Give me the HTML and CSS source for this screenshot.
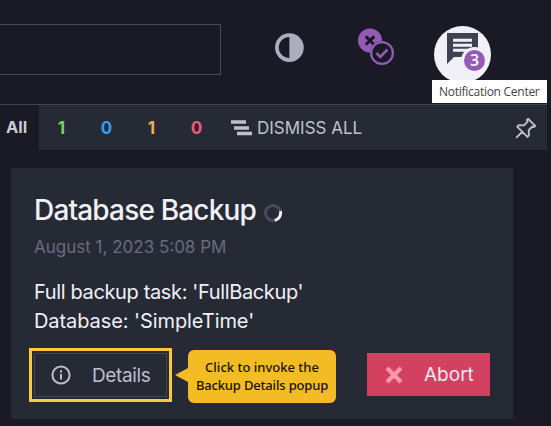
FILE: index.html
```html
<!DOCTYPE html>
<html lang="en">
<head>
<meta charset="utf-8">
<title>Notification Center</title>
<link rel="stylesheet" href="styles.css">
</head>
<body>
<header class="topbar">
  <div class="search"></div>
  <svg class="theme-icon" width="30" height="30" viewBox="0 0 30 30"><circle cx="15.4" cy="14.6" r="12.5" fill="none" stroke="#acacbd" stroke-width="3.8"/><path d="M15.4 2.6a12 12 0 0 1 0 24Z" fill="#acacbd"/></svg>
  <svg class="status-icon" width="38" height="38" viewBox="0 0 38 38"><circle cx="13" cy="12.6" r="12" fill="#955ab5"/><circle cx="25" cy="25" r="12" fill="#1a1926"/><path d="m8.8 8.4 8.4 8.4m0-8.4-8.4 8.4" stroke="#1a1926" stroke-width="3"/><circle cx="25" cy="25" r="10.9" fill="none" stroke="#955ab5" stroke-width="2.3"/><path d="m19.5 25 3.7 3.8 7.3-7.3" fill="none" stroke="#955ab5" stroke-width="2.6"/></svg>
  <div class="bell">
    <svg width="57" height="57" viewBox="0 0 57 57"><path d="M13 7h31v24H20l-7 7Z" fill="#3f4252"/><path d="M19 14.2h19M19 19.2h19M19 24.2h19" stroke="#f0f0f7" stroke-width="2.9"/></svg>
    <span class="badge">3</span>
  </div>
  <div class="tooltip">Notification Center</div>
</header>
<nav class="filters">
  <span class="tab-all">All</span>
  <span class="count green">1</span><span class="count blue">0</span><span class="count orange">1</span><span class="count red">0</span>
  <span class="dismiss"><svg width="21" height="16" viewBox="0 0 21 16"><path d="M0 2h15M3 8h15M6 13.5h15" stroke="#bfbfce" stroke-width="3.6"/></svg><span class="dismiss-label">DISMISS ALL</span></span>
  <svg class="pin" width="22" height="22" viewBox="0 0 22 22"><path d="m13.2 1.8 7 7-1.3 1.3-1.5-.6-3.7 3.7.2 5.2-1.5 1.5L2.2 9.7l1.5-1.5 5.2.2 3.7-3.7-.7-1.5ZM7.2 14.8l-6 6" fill="none" stroke="#c0c0cf" stroke-width="1.9" stroke-linejoin="round"/></svg>
</nav>
<main class="card">
  <h1><span class="title">Database Backup</span><svg width="20" height="20" viewBox="0 0 20 20"><circle cx="10" cy="10" r="7.6" fill="none" stroke="#484a59" stroke-width="3"/><path d="M17.5 8.2A7.6 7.6 0 0 1 11.8 17.4" fill="none" stroke="#f0f0f7" stroke-width="3"/></svg></h1>
  <div class="date">August 1, 2023 5:08 PM</div>
  <div class="message"><span class="line-a">Full backup task: 'FullBackup'</span><br><span class="line-b">Database: 'SimpleTime'</span></div>
  <div class="actions">
    <div class="highlight"><div class="button details"><svg width="20" height="20" viewBox="0 0 20 20"><circle cx="10" cy="10" r="8.6" fill="none" stroke="#bdbdcb" stroke-width="2"/><path d="M10 9v5.5M10 5.2v2.3" stroke="#bdbdcb" stroke-width="2"/></svg><span class="details-label">Details</span></div></div>
    <div class="callout"><span class="call-a">Click to invoke the</span><span class="call-b">Backup Details popup</span></div>
    <div class="button abort"><svg width="18" height="18" viewBox="0 0 18 18"><path d="m2 2 14 14m0-14L2 16" stroke="#ff96ab" stroke-width="4.2"/></svg><span class="abort-label">Abort</span></div>
  </div>
</main>
</body>
</html>
```
FILE: styles.css
```css
* { box-sizing: border-box; }
body { margin: 0; width: 551px; height: 426px; overflow: hidden; background: #1a1926; color: #f0f0f7; font-family: Inter, sans-serif; }
svg { display: block; flex: none; }
.topbar { position: relative; display: flex; width: 547px; height: 105px; border-bottom: 1px solid #44444f; }
.search { width: 221px; height: 51px; margin-top: 24px; border: 1px solid #484955; border-left: 0; }
.theme-icon { margin: 33px 0 0 53px; }
.status-icon { margin: 28px 0 0 53px; }
.bell { position: relative; width: 57px; height: 57px; margin: 26px 0 0 39px; border-radius: 50%; background: #f0f0f7; }
.badge { position: absolute; left: 27px; top: 21px; width: 27px; height: 27px; border: 3px solid #f0f0f7; border-radius: 50%; background: #955ab5; color: #f0f0f7; font: 600 16px/21px "Noto Sans", sans-serif; text-align: center; }
.tooltip { position: absolute; left: 432px; top: 80px; width: 115px; height: 23px; background: #fff; color: #444; font: 12px/23px "Open Sans", sans-serif; padding-left: 7px; white-space: nowrap; letter-spacing: -.27px; }
.filters { display: flex; align-items: center; width: 547px; height: 45px; background: #262a35; }
.tab-all { width: 39px; height: 45px; padding-left: 6px; background: #1a1926; color: #cacad6; font: 700 16.5px/45px Inter, sans-serif; }
.count { width: 45px; text-align: center; font-size: 17px; font-weight: 700; }
.green { color: #77d353; }
.blue { color: #2f9ef5; }
.orange { color: #efad57; }
.red { color: #f05b77; }
.dismiss { display: flex; align-items: center; gap: 5px; margin-left: 12px; color: #c0c0cf; font-size: 17px; white-space: nowrap; }
.pin { margin-left: auto; margin-right: 10px; }
.card { width: 502px; height: 251px; margin: 18px 0 0 11px; padding: 23px 23px 0; background: #262a35; }
h1 { display: flex; align-items: center; gap: 7px; height: 38px; margin: 0; font-size: 28px; font-weight: 500; white-space: nowrap; letter-spacing: -.83px; }
h1 svg { margin-top: 5px; }
.date { height: 34px; margin-top: 1px; color: #696a7f; font-size: 17px; line-height: 34px; }
.message { margin-top: 14px; font-size: 20px; line-height: 29px; white-space: nowrap; }
.line-a { letter-spacing: -.36px; }
.line-b { letter-spacing: -.08px; }
.actions { display: flex; height: 54px; margin: 12px 0 0 -5px; }
.highlight { width: 143px; height: 54px; padding: 2px; border: 3px solid #fdc93b; }
.button { display: flex; align-items: center; font-size: 19px; }
.details { width: 133px; height: 44px; border: 1px solid #444655; color: #bdbdcb; }
.details svg { margin-left: 16px; }
.details-label { margin-left: 21px; letter-spacing: -.35px; }
.callout { position: relative; display: flex; flex-direction: column; width: 148px; height: 53px; margin: 2px 0 0 16px; padding-top: 8px; border-radius: 6px; background: #f4bc24; color: #171100; font: 500 13px/18px "Noto Sans", sans-serif; align-items: center; white-space: nowrap; }
.call-b { letter-spacing: -.17px; }
.callout::before { content: ""; position: absolute; left: -13px; top: 18px; border: solid transparent; border-width: 7px 13px 7px 0; border-right-color: #f4bc24; }
.abort { width: 123px; height: 43px; margin: 5px 0 0 31px; background: #d24260; color: #f5e8ee; }
.abort svg { margin-left: 18px; }
.abort-label { margin-left: 21px; }
```
